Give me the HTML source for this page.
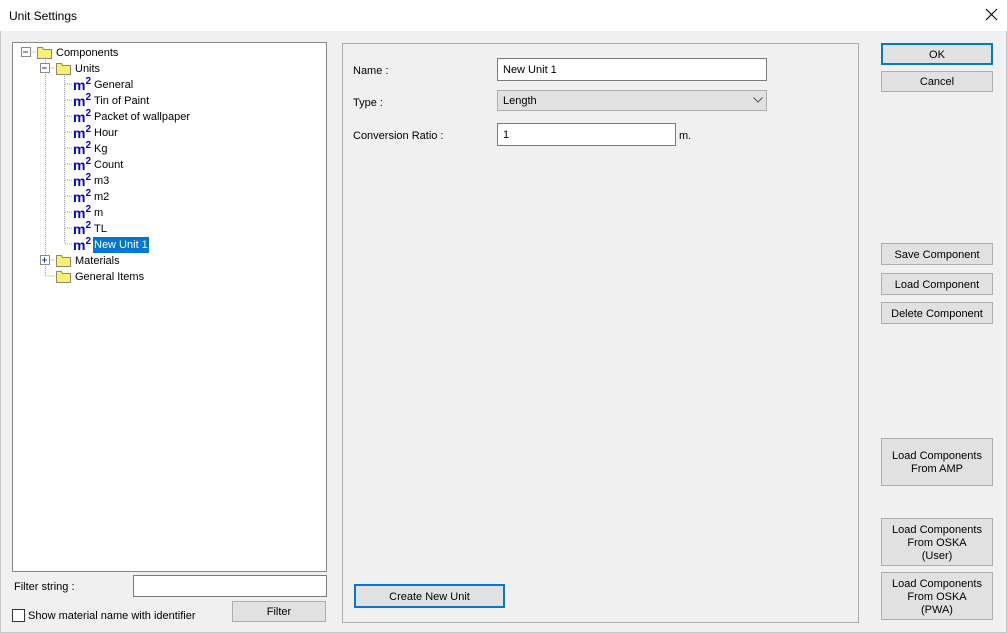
<!DOCTYPE html>
<html><head><style>
*{box-sizing:border-box;margin:0;padding:0}
body{width:1007px;height:633px;background:#f0f0f0;font-family:"Liberation Sans",sans-serif;font-size:11px;color:#000;position:relative;overflow:hidden}
.a{position:absolute}
.title{left:0;top:0;width:1007px;height:31px;background:#fff}
.btn{position:absolute;background:#e1e1e1;border:1px solid #adadad;text-align:center;display:flex;align-items:center;justify-content:center;line-height:13px;padding-top:2px}
.def{border:2px solid #0078d7}
.inp{position:absolute;background:#fff;border:1px solid #7a7a7a;padding-left:5px;display:flex;align-items:center}
.tr{position:absolute;height:16px;line-height:16px;white-space:nowrap}
.m2{position:absolute;color:#0000e0;font-weight:bold;font-size:14px;line-height:16px}
.m2 sup{font-size:10px;vertical-align:top;position:relative;top:-3px}
</style></head><body>
<div class="a title"></div>
<div class="a" style="left:9px;top:9px;font-size:12px">Unit Settings</div>
<svg class="a" style="left:985px;top:8px" width="13" height="13"><path d="M1 1L12 12M12 1L1 12" stroke="#000" stroke-width="1.1"/></svg>
<div class="a" style="left:0;top:31px;width:1007px;height:602px;border:1px solid #c8c8c8;border-top:none"></div>

<div class="a" style="left:12px;top:42px;width:315px;height:530px;background:#fff;border:1px solid #828790"></div>
<svg class="a" style="left:12px;top:42px" width="315" height="250">
<g stroke="#a0a0a0" stroke-dasharray="1,1" fill="none">
<path d="M14.5 10H24M33.5 16V234M33.5 26H43M33.5 218H43M33.5 234H43M52.5 32V202"/>
<path d="M53 42H61M53 58H61M53 74H61M53 90H61M53 106H61M53 122H61M53 138H61M53 154H61M53 170H61M53 186H61M53 202H61"/>
</g>
<g fill="#fff" stroke="#8a8a8a"><rect x="9.5" y="5.5" width="9" height="9"/><rect x="28.5" y="21.5" width="9" height="9"/><rect x="28.5" y="213.5" width="9" height="9"/></g>
<g stroke="#1a3a9a"><path d="M11 10h5M30 26h5M30 218h5M32.5 215.5v5"/></g>
<g stroke="#8a8a6a" fill="#f8f070">
<path d="M25.5 5.5h5l1 2h8v9h-14z"/><path d="M44.5 21.5h5l1 2h8v9h-14z"/><path d="M44.5 213.5h5l1 2h8v9h-14z"/><path d="M44.5 229.5h5l1 2h8v9h-14z"/>
</g>
</svg>
<div class="tr" style="left:56px;top:45px">Components</div>
<div class="tr" style="left:75px;top:61px">Units</div>
<div class="m2" style="left:73px;top:77px">m<sup>2</sup></div><div class="tr" style="left:94px;top:77px">General</div>
<div class="m2" style="left:73px;top:93px">m<sup>2</sup></div><div class="tr" style="left:94px;top:93px">Tin of Paint</div>
<div class="m2" style="left:73px;top:109px">m<sup>2</sup></div><div class="tr" style="left:94px;top:109px">Packet of wallpaper</div>
<div class="m2" style="left:73px;top:125px">m<sup>2</sup></div><div class="tr" style="left:94px;top:125px">Hour</div>
<div class="m2" style="left:73px;top:141px">m<sup>2</sup></div><div class="tr" style="left:94px;top:141px">Kg</div>
<div class="m2" style="left:73px;top:157px">m<sup>2</sup></div><div class="tr" style="left:94px;top:157px">Count</div>
<div class="m2" style="left:73px;top:173px">m<sup>2</sup></div><div class="tr" style="left:94px;top:173px">m3</div>
<div class="m2" style="left:73px;top:189px">m<sup>2</sup></div><div class="tr" style="left:94px;top:189px">m2</div>
<div class="m2" style="left:73px;top:205px">m<sup>2</sup></div><div class="tr" style="left:94px;top:205px">m</div>
<div class="m2" style="left:73px;top:221px">m<sup>2</sup></div><div class="tr" style="left:94px;top:221px">TL</div>
<div class="m2" style="left:73px;top:237px">m<sup>2</sup></div><div class="tr" style="left:93px;top:237px;background:#0078d7;color:#fff;padding:0 1px">New Unit 1</div>
<div class="tr" style="left:75px;top:253px">Materials</div>
<div class="tr" style="left:75px;top:269px">General Items</div>

<div class="a" style="left:14px;top:581px">Filter string :</div>
<div class="inp" style="left:133px;top:575px;width:194px;height:22px"></div>
<div class="a" style="left:12px;top:609px;width:13px;height:13px;background:#fff;border:1px solid #333"></div>
<div class="a" style="left:28px;top:610px">Show material name with identifier</div>
<div class="btn" style="left:232px;top:601px;width:94px;height:21px">Filter</div>

<div class="a" style="left:342px;top:43px;width:517px;height:580px;border:1px solid #adadad"></div>
<div class="a" style="left:353px;top:65px">Name :</div>
<div class="inp" style="left:497px;top:58px;width:270px;height:23px;padding-top:1px">New Unit 1</div>
<div class="a" style="left:353px;top:97px">Type :</div>
<div class="inp" style="left:497px;top:90px;width:270px;height:21px;background:#e1e1e1;border-color:#adadad;padding-top:1px">Length</div>
<svg class="a" style="left:753px;top:97px" width="10" height="6"><path d="M0.5 0.5L5 5L9.5 0.5" stroke="#555" fill="none"/></svg>
<div class="a" style="left:353px;top:130px">Conversion Ratio :</div>
<div class="inp" style="left:497px;top:123px;width:179px;height:23px;padding-top:1px">1</div>
<div class="a" style="left:679px;top:130px">m.</div>
<div class="btn def" style="left:354px;top:584px;width:151px;height:24px">Create New Unit</div>

<div class="btn def" style="left:881px;top:43px;width:112px;height:22px">OK</div>
<div class="btn" style="left:881px;top:71px;width:112px;height:21px">Cancel</div>
<div class="btn" style="left:881px;top:243px;width:112px;height:22px">Save Component</div>
<div class="btn" style="left:881px;top:273px;width:112px;height:22px">Load Component</div>
<div class="btn" style="left:881px;top:302px;width:112px;height:22px">Delete Component</div>
<div class="btn" style="left:881px;top:438px;width:112px;height:48px">Load Components<br>From AMP</div>
<div class="btn" style="left:881px;top:518px;width:112px;height:48px">Load Components<br>From OSKA<br>(User)</div>
<div class="btn" style="left:881px;top:572px;width:112px;height:48px">Load Components<br>From OSKA<br>(PWA)</div>
</body></html>
